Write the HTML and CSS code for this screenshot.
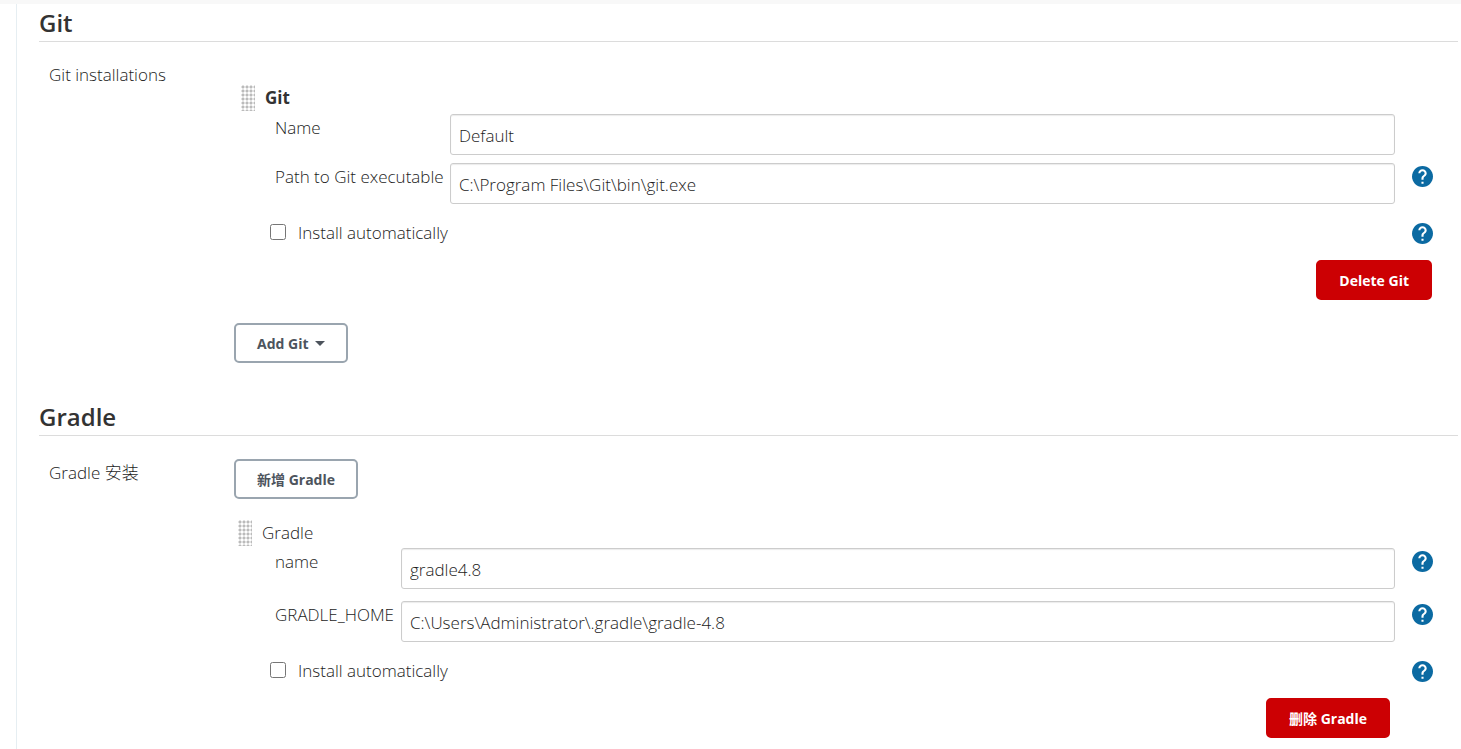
FILE: index.html
```
<!DOCTYPE html>
<html lang="zh-CN">
<head>
    <meta charset="UTF-8">
    <meta name="viewport" content="width=device-width, initial-scale=1.0">
    <title>Global Tool Configuration</title>
    <link rel="stylesheet" href="styles.css">
</head>
<body>
    <svg width="0" height="0" class="sprite">
        <symbol id="help" viewBox="2 2 20 20">
            <path fill="#0b6aa2" d="M12 2C6.480 2 2 6.480 2 12s4.480 10 10 10 10-4.480 10-10S17.520 2 12 2z"/>
            <path fill="#fff" d="M11 17h2v2h-2zM12 5c-2.210 0-4 1.790-4 4h2c0-1.100.9-2 2-2s2 .9 2 2c0 2-3 1.750-3 5v1h2v-.7c0-2.250 3-2.500 3-5.300 0-2.210-1.790-4-4-4z"/>
        </symbol>
    </svg>

    <div class="topbar"></div>
    <div class="page">
        <div class="side"></div>
        <main class="main">

            <section class="section">
                <h2 class="section-title">Git</h2>
                <div class="section-row">
                    <div class="section-label">Git installations</div>
                    <div class="section-body">
                        <div class="tool tool-git">
                            <div class="tool-head">
                                <span class="handle"></span>
                                <b>Git</b>
                            </div>
                            <div class="fields">
                                <label for="git-name">Name</label>
                                <input type="text" id="git-name" value="Default">
                                <span></span>
                                <label for="git-path">Path to Git executable</label>
                                <input type="text" id="git-path" value="C:\Program Files\Git\bin\git.exe">
                                <a href="#" class="help" aria-label="Help"><svg><use href="#help"/></svg></a>
                            </div>
                            <div class="auto">
                                <input type="checkbox" id="git-auto">
                                <label for="git-auto">Install automatically</label>
                                <a href="#" class="help" aria-label="Help"><svg><use href="#help"/></svg></a>
                            </div>
                            <div class="actions">
                                <button type="button" class="btn btn-danger">Delete Git</button>
                            </div>
                        </div>
                        <button type="button" class="btn">Add Git<span class="caret"></span></button>
                    </div>
                </div>
            </section>

            <section class="section">
                <h2 class="section-title">Gradle</h2>
                <div class="section-row">
                    <div class="section-label label-button">Gradle 安装</div>
                    <div class="section-body">
                        <button type="button" class="btn">新增 Gradle</button>
                        <div class="tool tool-gradle">
                            <div class="tool-head">
                                <span class="handle"></span>
                                <span>Gradle</span>
                            </div>
                            <div class="fields">
                                <label for="gradle-name">name</label>
                                <input type="text" id="gradle-name" value="gradle4.8">
                                <a href="#" class="help" aria-label="Help"><svg><use href="#help"/></svg></a>
                                <label for="gradle-home">GRADLE_HOME</label>
                                <input type="text" id="gradle-home" value="C:\Users\Administrator\.gradle\gradle-4.8">
                                <a href="#" class="help" aria-label="Help"><svg><use href="#help"/></svg></a>
                            </div>
                            <div class="auto">
                                <input type="checkbox" id="gradle-auto">
                                <label for="gradle-auto">Install automatically</label>
                                <a href="#" class="help" aria-label="Help"><svg><use href="#help"/></svg></a>
                            </div>
                            <div class="actions">
                                <button type="button" class="btn btn-danger">删除 Gradle</button>
                            </div>
                        </div>
                    </div>
                </div>
            </section>

        </main>
    </div>
</body>
</html>
```
FILE: styles.css
```
* {
    box-sizing: border-box;
}
body {
    margin: 0;
    background: #fff;
    color: #1c1c1c;
    font-family: "Open Sans", "Noto Sans CJK SC", sans-serif;
    font-size: 17px;
    font-weight: 300;
    line-height: 24px;
    overflow: hidden;
}
.sprite {
    display: none;
}
.topbar {
    height: 4px;
    background: #f8f8f8;
}
.page {
    display: flex;
    min-height: 100vh;
}
.side {
    width: 17px;
    border-right: 1px solid #e6eef2;
}
.main {
    flex: 1;
    padding: 0 3px 0 22px;
}

/* sections */
.section {
    margin-bottom: 35px;
}
.section-title {
    margin: 0;
    height: 38px;
    border-bottom: 1px solid #dcdcdc;
    color: #333;
    font-size: 24px;
    font-weight: 600;
    line-height: 38px;
}
.section-row {
    display: grid;
    grid-template-columns: 185px 1fr;
    padding-left: 10px;
}
.section-label {
    padding-top: 21px;
}
.label-button {
    padding-top: 25px;
}
.section-body {
    padding-top: 23px;
}

/* tool block */
.tool-head {
    display: flex;
    align-items: center;
    gap: 10px;
    height: 28px;
}
.tool-head b {
    color: #333;
    font-weight: 700;
}
.handle {
    width: 14px;
    height: 26px;
    background: radial-gradient(circle at 2px 2px, #bbb 1px, #fff 2px) 0 0 / 4px 4px;
}
.fields {
    display: grid;
    padding-left: 41px;
}
.fields label {
    padding-top: 2px;
    white-space: nowrap;
}
.fields input {
    width: 100%;
    height: 41px;
    padding: 1px 8px 0;
    border: 1px solid #ccc;
    border-radius: 3px;
    box-shadow: inset 0 1px 1px rgba(0, 0, 0, 0.08);
    background: #fff;
    color: #1c1c1c;
    font: inherit;
}
.help {
    width: 21px;
    height: 21px;
    margin: 3px 0 0 17px;
}
.help svg {
    display: block;
    width: 21px;
    height: 21px;
}
.auto {
    display: flex;
    align-items: center;
    height: 24px;
    margin-top: 17px;
    padding: 0 25px 0 36px;
}
.auto input {
    width: 16px;
    height: 16px;
    margin: 0 12px 2px 0;
}
.auto .help {
    margin: 0 0 0 auto;
}
.actions {
    display: flex;
    justify-content: flex-end;
    margin-top: 15px;
}

.tool-git {
    padding-top: 19px;
    padding-bottom: 23px;
}
.tool-git .tool-head {
    padding-left: 7px;
    margin-bottom: 2px;
}
.tool-git .fields {
    grid-template-columns: 175px 1fr 63px;
    row-gap: 8px;
}
.tool-git .actions {
    padding-right: 26px;
}

.tool-gradle {
    padding-top: 20px;
}
.tool-gradle .tool-head {
    padding-left: 4px;
    margin-bottom: 1px;
}
.tool-gradle .fields {
    grid-template-columns: 126px 1fr 63px;
    row-gap: 12px;
}
.tool-gradle .actions {
    padding-right: 68px;
}

/* buttons */
.btn {
    height: 40px;
    padding: 0 21px;
    border: 2px solid #9aa5af;
    border-radius: 5px;
    background: #fff;
    color: #4d545d;
    font-family: inherit;
    font-size: 14px;
    font-weight: 700;
    cursor: pointer;
}
.btn-danger {
    border-color: #cc0003;
    background: #cc0003;
    color: #fff;
}
.caret {
    display: inline-block;
    margin-left: 6px;
    border: 5px solid transparent;
    border-top-color: #4d545d;
    border-bottom: 0;
    vertical-align: 3px;
}
```
